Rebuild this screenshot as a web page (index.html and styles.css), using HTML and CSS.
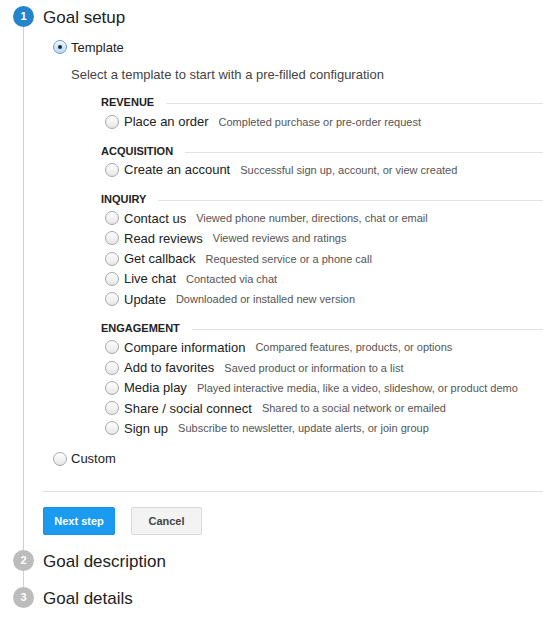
FILE: index.html
```html
<!DOCTYPE html>
<html>
<head>
<meta charset="utf-8">
<link rel="stylesheet" href="styles.css">
</head>
<body>
<div class="steps">
  <div class="step step-first">
    <div class="rail"><span class="num active">1</span><span class="line"></span></div>
    <div class="body body-first">
      <div class="title">Goal setup</div>
      <label class="choice top-choice"><span class="radio checked"></span><span class="lbl">Template</span></label>
      <div class="intro">Select a template to start with a pre-filled configuration</div>

      <div class="cats">
        <div class="cat">
          <div class="cat-head"><span>REVENUE</span><span class="rule"></span></div>
          <label class="choice"><span class="radio"></span><span class="lbl">Place an order</span><span class="desc">Completed purchase or pre-order request</span></label>
        </div>
        <div class="cat">
          <div class="cat-head"><span>ACQUISITION</span><span class="rule"></span></div>
          <label class="choice"><span class="radio"></span><span class="lbl">Create an account</span><span class="desc">Successful sign up, account, or view created</span></label>
        </div>
        <div class="cat">
          <div class="cat-head"><span>INQUIRY</span><span class="rule"></span></div>
          <label class="choice"><span class="radio"></span><span class="lbl">Contact us</span><span class="desc">Viewed phone number, directions, chat or email</span></label>
          <label class="choice"><span class="radio"></span><span class="lbl">Read reviews</span><span class="desc">Viewed reviews and ratings</span></label>
          <label class="choice"><span class="radio"></span><span class="lbl">Get callback</span><span class="desc">Requested service or a phone call</span></label>
          <label class="choice"><span class="radio"></span><span class="lbl">Live chat</span><span class="desc">Contacted via chat</span></label>
          <label class="choice"><span class="radio"></span><span class="lbl">Update</span><span class="desc">Downloaded or installed new version</span></label>
        </div>
        <div class="cat">
          <div class="cat-head"><span>ENGAGEMENT</span><span class="rule"></span></div>
          <label class="choice"><span class="radio"></span><span class="lbl">Compare information</span><span class="desc">Compared features, products, or options</span></label>
          <label class="choice"><span class="radio"></span><span class="lbl">Add to favorites</span><span class="desc">Saved product or information to a list</span></label>
          <label class="choice"><span class="radio"></span><span class="lbl">Media play</span><span class="desc">Played interactive media, like a video, slideshow, or product demo</span></label>
          <label class="choice"><span class="radio"></span><span class="lbl">Share / social connect</span><span class="desc">Shared to a social network or emailed</span></label>
          <label class="choice"><span class="radio"></span><span class="lbl">Sign up</span><span class="desc">Subscribe to newsletter, update alerts, or join group</span></label>
        </div>
      </div>

      <label class="choice top-choice custom"><span class="radio"></span><span class="lbl">Custom</span></label>
      <div class="sep"></div>
      <div class="buttons">
        <button class="btn btn-primary">Next step</button>
        <button class="btn btn-default">Cancel</button>
      </div>
    </div>
  </div>
  <div class="step">
    <div class="rail"><span class="num">2</span><span class="line"></span></div>
    <div class="body body-mid"><div class="title">Goal description</div></div>
  </div>
  <div class="step">
    <div class="rail"><span class="num">3</span></div>
    <div class="body"><div class="title">Goal details</div></div>
  </div>
</div>
</body>
</html>
```
FILE: styles.css
```css
html, body {
  margin: 0;
  padding: 0;
  background: #fff;
}
body {
  font-family: "Liberation Sans", Arial, sans-serif;
  color: #222;
}
.steps {
  padding-top: 6px;
}
.step {
  display: flex;
}
.rail {
  width: 43px;
  flex: none;
  display: flex;
  flex-direction: column;
  padding-left: 13px;
  box-sizing: border-box;
}
.num {
  width: 21px;
  height: 21px;
  border-radius: 50%;
  background: #bcbcbc;
  color: #fff;
  font-size: 11px;
  font-weight: bold;
  line-height: 21px;
  text-align: center;
  flex: none;
}
.num.active {
  background: #2485cb;
}
.line {
  flex: 1;
  width: 1px;
  margin-left: 10px;
  background: #cfcfcf;
}
.body {
  flex: 1;
  min-width: 0;
}
.body-first {
  padding-bottom: 15px;
}
.body-mid {
  padding-bottom: 16px;
}
.title {
  font-size: 17px;
  line-height: 21px;
  padding-top: 1px;
  margin-bottom: -1px;
  color: #222;
}
.choice {
  display: flex;
  align-items: center;
  height: 20px;
  font-size: 13px;
  color: #222;
}
.top-choice {
  margin-left: 10px;
  margin-top: 10px;
}
.top-choice .radio {
  margin-right: 4px;
}
.radio {
  width: 12px;
  height: 12px;
  border-radius: 50%;
  border: 1px solid #a6a6a6;
  background: linear-gradient(#ffffff, #e6e6e6);
  box-shadow: inset 0 1px 1px rgba(255,255,255,0.8);
  margin-right: 5px;
  flex: none;
  position: relative;
}
.radio.checked {
  border-color: #6b9ccd;
  background: linear-gradient(#eaf4fd, #bcd7f1);
}
.radio.checked::after {
  content: "";
  position: absolute;
  left: 4px;
  top: 4px;
  width: 4px;
  height: 4px;
  border-radius: 50%;
  background: #1d2a3a;
}
.lbl {
  white-space: nowrap;
}
.desc {
  font-size: 11px;
  color: #555;
  margin-left: 10px;
  white-space: nowrap;
}
.intro {
  margin-left: 28px;
  margin-top: 8px;
  font-size: 13px;
  line-height: 20px;
  color: #444;
}
.cats {
  margin-left: 58px;
  margin-top: 8px;
}
.cat + .cat {
  margin-top: 9.5px;
}
.cat .choice {
  margin-left: 4px;
  height: 20.25px;
}
.cat-head {
  display: flex;
  align-items: center;
  height: 18.5px;
  font-size: 11px;
  font-weight: bold;
  color: #222;
}
.rule {
  flex: 1;
  height: 1px;
  background: #e2e2e2;
  margin-left: 12px;
  margin-top: 3px;
}
.custom {
  margin-top: 10px;
}
.sep {
  height: 1px;
  background: #dedede;
  margin-top: 22px;
}
.buttons {
  display: flex;
  gap: 16px;
  margin-top: 15px;
}
.btn {
  height: 28px;
  border-radius: 2px;
  font-family: "Liberation Sans", Arial, sans-serif;
  font-size: 11px;
  font-weight: bold;
  padding: 0;
  cursor: pointer;
}
.btn-primary {
  width: 72px;
  background: #1b9bef;
  border: 1px solid #1690e2;
  color: #fff;
}
.btn-default {
  width: 71px;
  background: #f3f3f3;
  border: 1px solid #d9d9d9;
  color: #444;
}
```
